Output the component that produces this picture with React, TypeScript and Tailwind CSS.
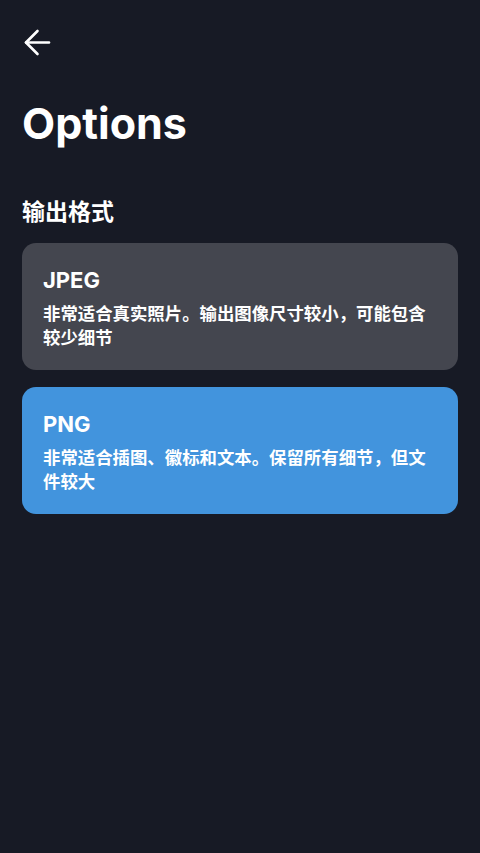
import React, { useState } from 'react';

const formats = [
  { id: 'jpeg', name: 'JPEG', desc: '非常适合真实照片。输出图像尺寸较小，可能包含较少细节' },
  { id: 'png', name: 'PNG', desc: '非常适合插图、徽标和文本。保留所有细节，但文件较大' },
];

export default function App() {
  const [selected, setSelected] = useState('png');

  return (
    <div
      className="min-h-[853px] bg-[#171a25] text-white px-[22px]"
      style={{ fontFamily: 'Inter, "Noto Sans CJK SC", sans-serif' }}
    >
      {/* Back button */}
      <div className="pt-[29px] h-[98px]">
        <button className="ml-[2px] w-[27px] h-[27px] flex items-center justify-center">
          <svg width="27" height="27" viewBox="0 0 27 27" fill="none" stroke="white" strokeWidth="2.6" strokeLinecap="round" strokeLinejoin="round">
            <path d="M2 13.5H25" />
            <path d="M13.5 2L2 13.5 13.5 25" />
          </svg>
        </button>
      </div>

      <h1 className="text-[43px] leading-[50px] font-bold">Options</h1>

      <h2 className="mt-[49px] text-[23px] leading-[30px] font-bold">输出格式</h2>

      <div className="mt-[16px] flex flex-col gap-[17px]">
        {formats.map((f) => (
          <button
            key={f.id}
            onClick={() => setSelected(f.id)}
            className={`text-left rounded-[14px] px-[21px] pt-[23px] pb-[20px] ${
              selected === f.id ? 'bg-[#4294dd]' : 'bg-[#44464f]'
            }`}
          >
            <div className="text-[22px] leading-[28px] font-bold">{f.name}</div>
            <div className="mt-[8px] text-[17.4px] leading-[24px] font-bold">{f.desc}</div>
          </button>
        ))}
      </div>
    </div>
  );
}
